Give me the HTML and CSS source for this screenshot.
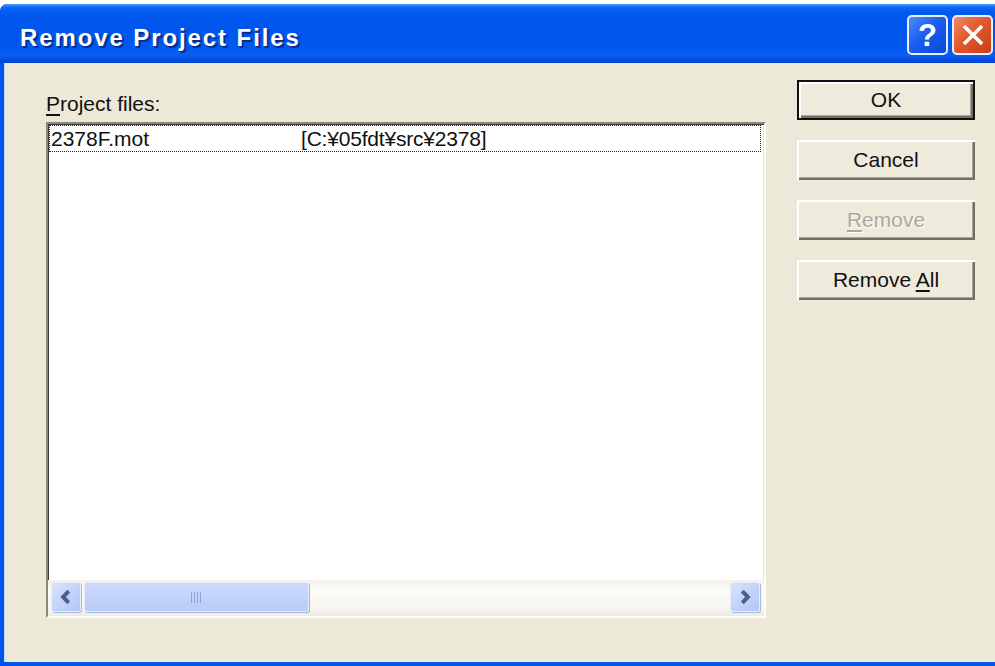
FILE: index.html
```html
<!DOCTYPE html>
<html lang="en">
<head>
<meta charset="utf-8">
<title>Remove Project Files</title>
<link rel="stylesheet" href="styles.css">
</head>
<body>
<div class="window">
  <div class="titlebar">
    <span class="title">Remove Project Files</span>
    <div class="caption-buttons">
      <span class="cap-btn help">?</span>
      <span class="cap-btn close">
        <svg viewBox="0 0 20 20" width="26" height="26"><path d="M4 4 L16 16 M16 4 L4 16" stroke="#fff" stroke-width="2.8" stroke-linecap="square"/></svg>
      </span>
    </div>
  </div>
  <div class="client">
    <div class="files">
      <div class="label"><u>P</u>roject files:</div>
      <div class="listbox">
        <div class="rows">
          <div class="row focused">
            <span class="col-name">2378F.mot</span>
            <span class="col-path">[C:¥05fdt¥src¥2378]</span>
          </div>
        </div>
        <div class="hscroll">
          <span class="sb-arrow">
            <svg viewBox="0 0 10 10" width="18" height="18"><path d="M6.5 1.8 L3.4 5 L6.5 8.2" fill="none" stroke="#4d6185" stroke-width="2.2"/></svg>
          </span>
          <span class="sb-track">
            <span class="sb-thumb"><span class="grip"></span></span>
          </span>
          <span class="sb-arrow">
            <svg viewBox="0 0 10 10" width="18" height="18"><path d="M3.5 1.8 L6.6 5 L3.5 8.2" fill="none" stroke="#4d6185" stroke-width="2.2"/></svg>
          </span>
        </div>
      </div>
    </div>
    <div class="actions">
      <button class="btn default">OK</button>
      <button class="btn">Cancel</button>
      <button class="btn" disabled><u>R</u>emove</button>
      <button class="btn">Remove <u>A</u>ll</button>
    </div>
  </div>
</div>
</body>
</html>
```

FILE: styles.css
```css
html, body {
  margin: 0;
  padding: 0;
  background: #ffffff;
  overflow: hidden;
}

body {
  width: 995px;
  height: 666px;
  font-family: "Liberation Sans", Arial, sans-serif;
}

.window {
  margin-top: 4px;
  width: 1004px;
  height: 662px;
  display: flex;
  flex-direction: column;
  background: #0055ea;
  border-radius: 7px 7px 0 0;
  box-sizing: border-box;
  padding: 0 4px 4px 4px;
  overflow: hidden;
}

/* title bar */
.titlebar {
  height: 59px;
  margin: 0 -4px;
  padding: 0 0 0 20px;
  display: flex;
  align-items: center;
  justify-content: space-between;
  background: linear-gradient(to bottom,
    #4b9bff 0%, #0b66f6 6%, #0058ee 16%, #0056ec 45%,
    #0059f0 75%, #0b5df2 88%, #0043cc 100%);
  border-radius: 7px 7px 0 0;
}

.title {
  color: #ffffff;
  font-weight: bold;
  font-size: 24px;
  letter-spacing: 1.9px;
  text-shadow: 1px 1px 0 #0a2a8a, 2px 2px 1px rgba(0, 20, 100, 0.6);
  margin-top: 8px;
}

.caption-buttons {
  display: flex;
  gap: 4px;
  margin-right: 11px;
  margin-top: 3px;
}

.cap-btn {
  width: 41px;
  height: 40px;
  box-sizing: border-box;
  border: 2px solid #e8eefc;
  border-radius: 5px;
  display: flex;
  align-items: center;
  justify-content: center;
  color: #ffffff;
}

.help {
  background: linear-gradient(135deg, #4a8cff 0%, #1a5ef0 45%, #0a48d8 100%);
  font-family: "Liberation Sans", Arial, sans-serif;
  font-weight: bold;
  font-size: 31px;
  line-height: 1;
}

.close {
  background: linear-gradient(135deg, #f08a62 0%, #e2582c 45%, #c8401a 100%);
}

/* dialog client area */
.client {
  flex: 1;
  display: flex;
  background: #ece9d8;
  border-left: 1px solid #c9d8fb;
  padding: 17px 0 0 41px;
}

.files {
  display: flex;
  flex-direction: column;
}

.label {
  font-size: 21px;
  line-height: 24px;
  color: #111;
  margin-top: 12px;
  margin-bottom: 6px;
}

.label u, .btn u {
  text-underline-offset: 3px;
}

.listbox {
  width: 720px;
  height: 496px;
  box-sizing: border-box;
  background: #ffffff;
  border-style: solid;
  border-width: 2px;
  border-color: #8a8879 #fdfdfb #fdfdfb #8a8879;
  box-shadow: inset 1px 1px 0 #3a3a36, inset -1px -1px 0 #e4e2d6;
  display: flex;
  flex-direction: column;
}

.rows {
  flex: 1;
  padding: 1px 3px 0 1px;
}

.row {
  height: 25px;
  display: flex;
  align-items: center;
  font-size: 21px;
  color: #111;
  border: 1px dotted #222;
}

.col-name {
  width: 250px;
  padding-left: 1px;
}

.col-path {
  letter-spacing: -0.2px;
}

/* horizontal scroll bar */
.hscroll {
  height: 34px;
  display: flex;
  align-items: center;
  padding: 0 4px 2px 3px;
  gap: 3px;
  background: linear-gradient(to bottom, #f3f1e9 0%, #fbfbf8 25%, #f6f5ef 80%, #ecebe2 100%);
}

.sb-arrow {
  width: 30px;
  height: 30px;
  box-sizing: border-box;
  border: 1px solid #e8edfa;
  border-radius: 3px;
  background: linear-gradient(135deg, #d8e3fc 0%, #c3d3fb 50%, #b2c6f6 100%);
  box-shadow: 1px 1px 0 #a8b8d8;
  display: flex;
  align-items: center;
  justify-content: center;
}

.sb-track {
  flex: 1;
  height: 30px;
  display: flex;
}

.sb-thumb {
  width: 225px;
  height: 30px;
  box-sizing: border-box;
  border: 1px solid #e6ecfb;
  border-radius: 3px;
  background: linear-gradient(to bottom, #cdd9fb 0%, #c3d3fb 50%, #b9cbf8 100%);
  box-shadow: 1px 1px 0 #a4b4d6;
  display: flex;
  align-items: center;
  justify-content: center;
}

.grip {
  width: 11px;
  height: 11px;
  background: repeating-linear-gradient(to right, #8fa4d6 0 1px, transparent 1px 3px);
}

/* push buttons */
.actions {
  margin-left: 31px;
  display: flex;
  flex-direction: column;
  gap: 20px;
}

.btn {
  width: 178px;
  height: 40px;
  box-sizing: border-box;
  border: none;
  background: #eeebdd;
  font-family: "Liberation Sans", Arial, sans-serif;
  font-size: 21px;
  color: #111;
  padding: 0;
  box-shadow: inset 2px 2px 0 #ffffff, inset -2px -2px 0 #716f64, inset -3px -3px 0 #aca899;
}

.btn.default {
  border: 2px solid #111;
}

.btn:disabled {
  color: #aca899;
  text-shadow: 1px 1px 0 #ffffff;
}
```
